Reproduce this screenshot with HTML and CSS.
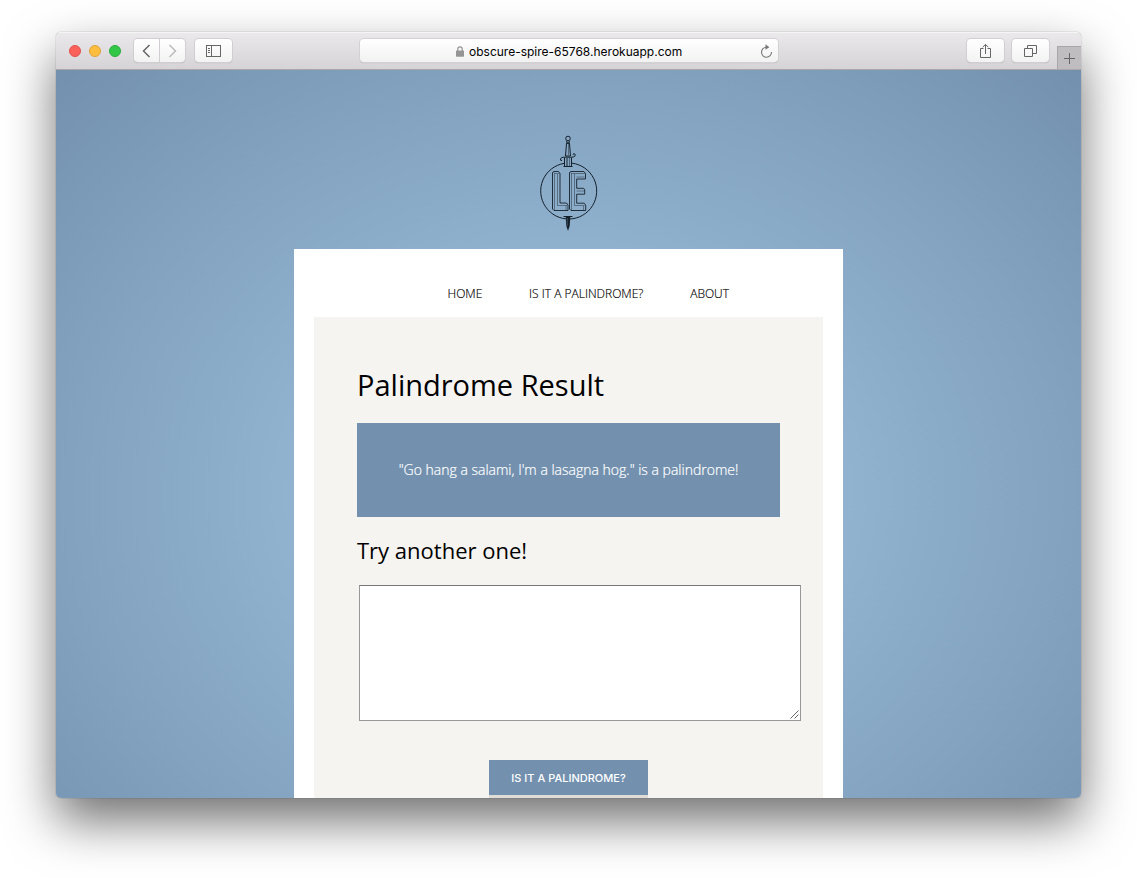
FILE: index.html
```
<!DOCTYPE html>
<html lang="en">
<head>
<meta charset="utf-8">
<title>Palindrome Result</title>
<link rel="stylesheet" href="styles.css">
</head>
<body>
<div class="window">
  <header class="toolbar">
    <div class="lights"><i class="light red"></i><i class="light yellow"></i><i class="light green"></i></div>
    <div class="history">
      <span class="tool back"><svg width="25" height="22" viewBox="0 0 25 22"><path d="M15.500 5 9.500 11l6 6" fill="none" stroke="#666" stroke-width="1.500"/></svg></span>
      <span class="tool forward"><svg width="25" height="22" viewBox="0 0 25 22"><path d="m9.500 5 6 6-6 6" fill="none" stroke="#bbb" stroke-width="1.500"/></svg></span>
    </div>
    <span class="tool sidebar"><svg width="15" height="12" viewBox="0 0 15 12" fill="none" stroke="#666"><rect x=".5" y=".5" width="14" height="11"/><path d="M5.500 0v12M2 3.500h2M2 5.500h2M2 7.500h2"/></svg></span>
    <div class="address">
      <svg class="lock" width="8" height="11" viewBox="0 0 8 11"><rect y="4.500" width="8" height="6.200" rx=".6" fill="#959595"/><path d="M1.800 5V3a2.200 2.200 0 0 1 4.400 0v2" fill="none" stroke="#959595" stroke-width="1.200"/></svg>
      <span class="url">obscure-spire-65768.herokuapp.com</span>
      <svg class="reload" width="13" height="15" viewBox="0 0 13 15"><path d="M8 3.200H6.500a5 5 0 1 0 5 4.900" fill="none" stroke="#777" stroke-width="1.100"/><path d="M5.500.3v5.500l3.800-2.600z" fill="#777"/></svg>
    </div>
    <span class="tool share"><svg width="13" height="16" viewBox="0 0 13 16" fill="none" stroke="#666"><path d="M4.500 5.500h-3v9h10v-9h-3M6.500 11V1.500M3.700 4.200l2.800-2.800 2.800 2.800"/></svg></span>
    <span class="tool tabs"><svg width="13" height="14" viewBox="0 0 13 14" fill="none" stroke="#666"><path d="M.5 4.500h8v8h-8zM3.500 4V1.500h9v8H9"/></svg></span>
    <span class="newtab"><svg width="11" height="11" viewBox="0 0 11 11"><path d="M5.500 0v11M0 5.500h11" stroke="#666"/></svg></span>
  </header>
  <main class="page">
    <svg class="logo" width="61" height="98" viewBox="0 0 61 98" fill="none" stroke="#14202b" stroke-width="1">
      <path d="M26 29.400A28 28 0 1 0 34 29.200"/>
      <circle cx="30" cy="4.500" r="2.300"/>
      <path d="M28.800 7v2h2.400V7M28.500 9.500h3l1 12.500h-5z"/>
      <path d="M30.500 10v11" opacity=".45"/>
      <path d="M24 26.500q-1.800.5-1.500-1.500.5-1.800 3-1.800h8q3 0 3.700-1.500.4-2-1.400-2-1 .3-.6 1.200"/>
      <path d="M26.500 23.500V32M33.500 23.500V32M25.500 32.500h9M29 24v8"/>
      <path d="M31.500 24v8" opacity=".5"/>
      <path d="M14.500 38.500l1-1h5l1.500 2v29.500h6.500l1.500 2v5.500H16l-1.500-1.500z" stroke-width=".9"/>
      <path d="M17 39.500h4.500M16.500 39v37M19.500 40v31.500h9.500M28 71.500v4.500M15 38l1.500 1.500" opacity=".55" stroke-width=".8"/>
      <path d="M31.500 38.500l1-1h13.500l1.500 2v5.500H38.700v9.300h7l1 1.700v4.200h-8v9h7.500l1.500 2v5.300H33l-1.500-1.500z" stroke-width=".9"/>
      <path d="M34 39.500h13M33.500 39v37M36.500 40v31.500h10M38.500 43h8M38.500 57h8M45.500 72v4M32 38l1.500 1.500" opacity=".55" stroke-width=".8"/>
      <path d="M25.500 82.500h9"/>
      <path d="M27.700 83h4.600l-.5 8.500L30 97l-1.800-5.500z" fill="#14202b" stroke="none"/>
      <path d="M29.200 84v8" stroke="#5a7187" stroke-width=".6"/>
    </svg>
    <div class="sheet">
      <nav class="menu"><span>HOME</span><span>IS IT A PALINDROME?</span><span>ABOUT</span></nav>
      <section class="content">
        <h1>Palindrome Result</h1>
        <div class="result">"Go hang a salami, I'm a lasagna hog." is a palindrome!</div>
        <h2>Try another one!</h2>
        <div class="field"><svg width="9" height="9" viewBox="0 0 9 9"><path d="M.5 8.500l8-8M4.500 8.500l4-4" stroke="#555" stroke-width=".9"/></svg></div>
        <div class="submit">IS IT A PALINDROME?</div>
      </section>
    </div>
  </main>
</div>
</body>
</html>
```
FILE: styles.css
```
* { box-sizing: border-box; }
html, body { margin: 0; height: 100%; }
body { background: #fff; overflow: hidden; padding: 32px 56px; font-family: "Open Sans", sans-serif; color: #000; }
svg { display: block; flex: none; }
.window { width: 1025px; height: 766px; border-radius: 5px; overflow: hidden; display: flex; flex-direction: column; box-shadow: 0 0 1px rgba(0,0,0,.6), 0 23px 50px rgba(0,0,0,.56); }
.toolbar { height: 38px; flex: none; display: flex; align-items: flex-start; padding: 7px 0 0 13px; background: linear-gradient(#ebe9eb, #d5d3d5); border-bottom: 1px solid #aaa6aa; box-shadow: inset 0 1px #f6f5f6; }
.lights { display: flex; gap: 8px; padding-top: 6px; width: 65px; }
.light { width: 12px; height: 12px; border-radius: 50%; }
.red { background: #fc605b; border: 1px solid #e2504c; }
.yellow { background: #fdbe40; border: 1px solid #e0a23c; }
.green { background: #33c748; border: 1px solid #2bac3b; }
.history { display: flex; gap: 1px; margin-right: 10px; }
.tool { height: 23px; display: flex; align-items: center; justify-content: center; background: linear-gradient(#fff, #f3f3f3); border-radius: 4px; box-shadow: 0 0 0 1px #d0ced0, 0 1px 1px #aaa; }
.tool.back, .tool.forward { width: 25px; }
.tool.back { border-radius: 4px 0 0 4px; }
.tool.forward { border-radius: 0 4px 4px 0; }
.sidebar { width: 37px; }
.address { width: 418px; height: 23px; margin-left: 128px; margin-right: 189px; border-radius: 4px; background: linear-gradient(#fff, #f2f2f2); box-shadow: 0 0 0 1px #d3d1d3, 0 1px 1px #aaa; display: flex; align-items: center; padding: 1px 5px 0 96px; }
.url { margin-left: 5px; padding-top: 1px; font: 400 12px/22px Inter, sans-serif; width: 213px; white-space: nowrap; }
.reload { margin-left: auto; }
.share { width: 37px; margin-right: 8px; }
.tabs { width: 37px; margin-right: 8px; }
.newtab { flex: 1; height: 23px; margin-top: 7px; display: flex; align-items: center; justify-content: center; background: #c0bdc0; border-top: 1px solid #a9a6a9; border-left: 1px solid #a9a6a9; }
.page { flex: 1; min-height: 0; display: flex; flex-direction: column; align-items: center; padding-top: 64px; background: radial-gradient(ellipse 725px 600px at 50% 424px, #a4c8e3 0, #7391af 100%); }
.logo { margin-bottom: 17px; }
.sheet { width: 549px; height: 549px; flex: none; background: #fff; padding: 0 20px; }
.menu { height: 68px; display: flex; gap: 46.800px; padding: 36px 0 0 133.500px; font-size: 12px; font-weight: 300; line-height: 17px; white-space: nowrap; color: #000; -webkit-text-stroke: .15px #000; }
.content { height: 481px; background: #f5f4f0; padding: 47px 43px 0; display: flex; flex-direction: column; }
h1 { margin: 0 0 18px; font-size: 29px; line-height: 41px; font-weight: 400; white-space: nowrap; }
.result { height: 94px; flex: none; background: #7391af; color: #fff; font-size: 14px; font-weight: 300; line-height: 94px; text-align: center; white-space: nowrap; -webkit-text-stroke: .2px #fff; }
h2 { margin: 17px 0 19px; font-size: 22px; line-height: 32px; font-weight: 400; white-space: nowrap; }
.field { width: 442px; height: 136px; flex: none; margin-left: 2px; background: #fff; border: 1px solid #989898; border-top-color: #777; display: flex; align-items: flex-end; justify-content: flex-end; padding: 1px; }
.submit { width: 159px; height: 35px; flex: none; margin: 39px 0 0 132px; background: #7391af; color: #fff; font: 500 11px/36px Inter, sans-serif; text-align: center; white-space: nowrap; box-shadow: 0 4px #dfddd8; }
```
